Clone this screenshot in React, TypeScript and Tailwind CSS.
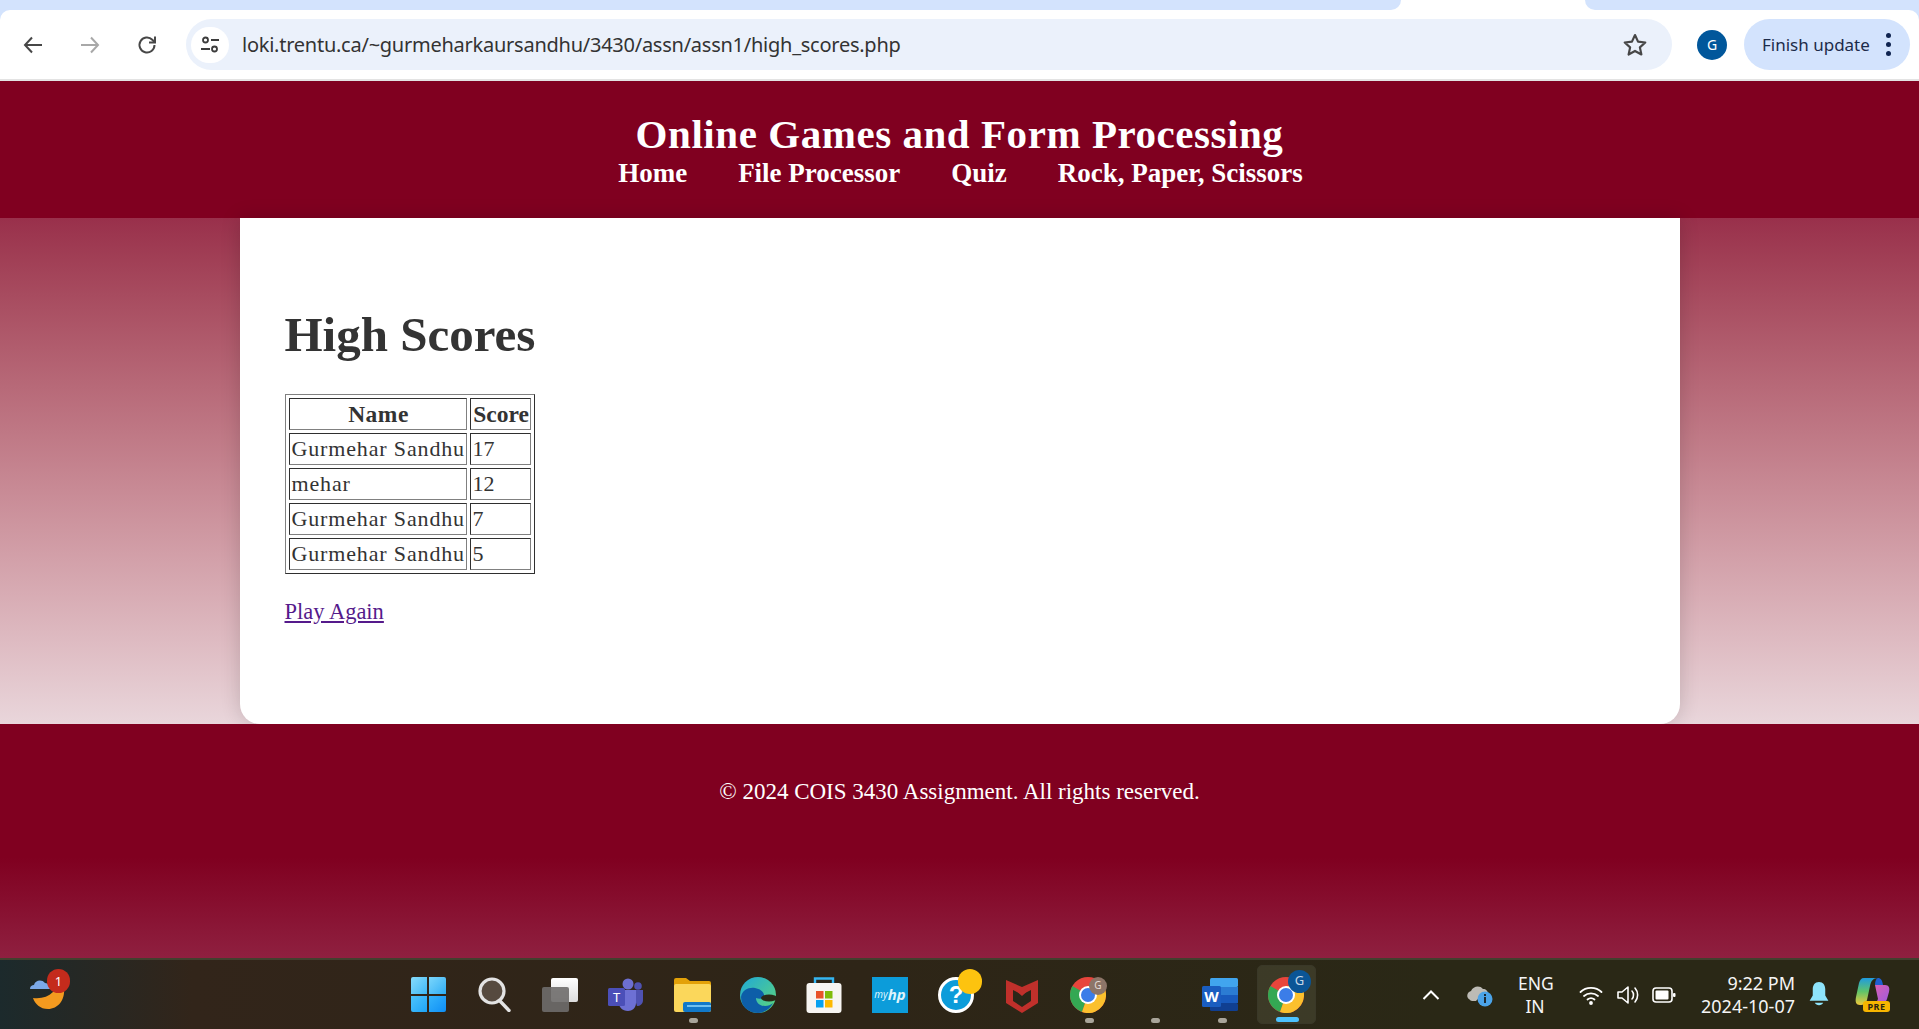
import React from "react";

const serif = "font-['Liberation_Serif',serif]";
const ui = "font-['Noto_Sans',sans-serif]";

function ChromeLogo({ badge, active }: { badge: string; active?: boolean }) {
  return (
    <div className="relative w-[36px] h-[36px]">
      <svg viewBox="0 0 36 36" className="w-[36px] h-[36px]">
        <circle cx="18" cy="18" r="18" fill="#e8453c" />
        <path d="M18 18 L2.400 9 A18 18 0 0 0 12 35 Z" fill="#34a853" />
        <path d="M18 18 L33.600 9 H18 M18 18 L33.600 9 A18 18 0 0 1 15 35.800 L12 35 Z" fill="#fbc02d" />
        <circle cx="18" cy="18" r="9" fill="#fff" />
        <circle cx="18" cy="18" r="7" fill="#3b7de8" />
      </svg>
      {active ? (
        <span className={`absolute -top-[7px] -right-[7px] w-[23px] h-[23px] rounded-full flex items-center justify-center text-[13px] text-[#c6d6e6] bg-[#0b5596] ${ui}`}>{badge}</span>
      ) : (
        <span className={`absolute top-0 -right-[1px] w-[18px] h-[18px] rounded-full flex items-center justify-center text-[10px] text-[#e4dcd6] bg-[#8d7568] ${ui}`}>{badge}</span>
      )}
    </div>
  );
}

function Slot({ children }: { children?: React.ReactNode }) {
  return <div className="w-[66px] flex justify-center items-center">{children}</div>;
}

function Taskbar() {
  return (
    <footer className="h-[71px] border-t-2 border-t-[#42402e] flex items-center shrink-0 relative bg-[linear-gradient(to_right,#1c2a2c_0%,#32251a_10%,#2e2517_45%,#2a2816_75%,#2a2816_100%)]">
      {/* weather widget */}
      <div className="absolute left-[30px] top-[9px] w-[40px] h-[40px]">
        <svg viewBox="0 0 40 40" className="w-[40px] h-[40px]">
          <path d="M3 29c8 1 15-1 20-6 3-3 6-5 11-3 1 11-6 20-16 20C10 40 5 35 3 29z" fill="#f39a1f" />
          <path d="M0 20c0-3 2-4 4-4 1-5 8-6 11-2 3 0 5 3 5 6z" fill="#7ba9e8" />
        </svg>
        <span className={`absolute left-[17px] top-0 w-[23px] h-[24px] rounded-full bg-[#c42b1c] text-white text-[13px] leading-[24px] text-center ${ui}`}>1</span>
      </div>

      <div className="absolute left-[395px] top-0 h-full flex items-center">
        <Slot>
          <div className="grid grid-cols-2 gap-[2px] w-[35px] h-[35px]">
            <span className="bg-gradient-to-br from-[#86dcfb] to-[#3cb8f5] rounded-tl-[2px]" />
            <span className="bg-gradient-to-br from-[#7ad6fb] to-[#2aaef5] rounded-tr-[2px]" />
            <span className="bg-gradient-to-br from-[#4cc4fb] to-[#1ca4f7] rounded-bl-[2px]" />
            <span className="bg-gradient-to-br from-[#34b4fb] to-[#0d8ef5] rounded-br-[2px]" />
          </div>
        </Slot>
        <Slot>
          <svg viewBox="0 0 33 35" className="w-[33px] h-[35px]">
            <circle cx="14" cy="14" r="12" fill="#564a3f" stroke="#e3e3e3" strokeWidth="3.200" />
            <path d="M22 24l9 9.500" stroke="#e3e3e3" strokeWidth="3.400" strokeLinecap="round" />
          </svg>
        </Slot>
        <Slot>
          <div className="relative w-[36px] h-[34px]">
            <span className="absolute left-[9px] top-0 w-[27px] h-[24px] rounded-[2px] bg-gradient-to-b from-white to-[#ddd]" />
            <span className="absolute left-0 top-[9px] w-[27px] h-[25px] rounded-[2px] bg-[#6f6d6b]/90" />
          </div>
        </Slot>
        <Slot>
          <svg viewBox="0 0 36 33" className="w-[36px] h-[33px]">
            <circle cx="20" cy="6" r="5.500" fill="#6d6fd0" />
            <circle cx="30" cy="8" r="3.800" fill="#4f52b2" />
            <path d="M24 12h11v10c0 4-3 6-6 6z" fill="#4f52b2" />
            <path d="M11 12h17v13c0 5-4 8-8 8-6 0-9-4-9-8z" fill="#6d70d4" />
            <rect x="0" y="10" width="17" height="18" rx="1.500" fill="#4b4fb8" />
            <text x="8.500" y="24" textAnchor="middle" fontSize="13" fill="#fff" fontFamily="Noto Sans">T</text>
          </svg>
        </Slot>
        <Slot>
          <svg viewBox="0 0 37 34" className="w-[37px] h-[34px]">
            <path d="M0 2a2 2 0 0 1 2-2h10l4 3h19a2 2 0 0 1 2 2v4H0z" fill="#e3a108" />
            <rect x="0" y="6" width="37" height="28" rx="2" fill="#fbd75b" />
            <rect x="9" y="24" width="28" height="10" rx="2" fill="#1178c8" />
            <rect x="13" y="27" width="24" height="2" fill="#6fc0f0" />
          </svg>
        </Slot>
        <Slot>
          <svg viewBox="0 0 36 36" className="w-[36px] h-[36px]">
            <defs>
              <linearGradient id="edgeA" x1="0" y1="0" x2="1" y2="1">
                <stop offset="0" stopColor="#1fa8d8" />
                <stop offset="1" stopColor="#5fd878" />
              </linearGradient>
            </defs>
            <circle cx="18" cy="18" r="18" fill="url(#edgeA)" />
            <path d="M1 20c1-7 8-10 14-9 6 1 10 5 9 9-1 2-5 2-8 1 0 4 3 8 9 8 3 0 6-1 8-3-3 6-9 10-15 10C9 36 1 30 1 20z" fill="#0d5ea8" />
            <ellipse cx="29" cy="21" rx="8" ry="3.500" fill="#2a2a18" />
          </svg>
        </Slot>
        <Slot>
          <svg viewBox="0 0 36 36" className="w-[36px] h-[36px]">
            <path d="M9 7V1.500h18V7" fill="none" stroke="#35b6f2" strokeWidth="2.400" />
            <rect x="0.500" y="6" width="35" height="30" rx="3" fill="#f7f5f2" />
            <rect x="10" y="14" width="7.500" height="7.500" fill="#e8532a" />
            <rect x="19" y="14" width="7.500" height="7.500" fill="#80bb0a" />
            <rect x="10" y="23" width="7.500" height="7.500" fill="#08a1f0" />
            <rect x="19" y="23" width="7.500" height="7.500" fill="#fdb900" />
          </svg>
        </Slot>
        <Slot>
          <div className={`w-[36px] h-[36px] bg-[#0c9cda] flex items-center justify-center text-[#dff4fc] text-[15px] italic ${ui}`}>
            <span className="text-[10px]">my</span><b>hp</b>
          </div>
        </Slot>
        <Slot>
          <div className="relative w-[36px] h-[36px]">
            <div className="absolute left-0 top-0 w-[36px] h-[36px] rounded-full bg-[#0c9cda] border-[3px] border-white flex items-center justify-center text-white text-[24px] font-bold leading-none font-['Liberation_Sans',sans-serif]">?</div>
            <span className="absolute left-[20px] -top-[8px] w-[24px] h-[25px] rounded-full bg-[#fdc30f]" />
          </div>
        </Slot>
        <Slot>
          <svg viewBox="0 0 32 36" className="w-[32px] h-[36px]">
            <path d="M0 3l16 7 16-7v23L16 36 0 26z" fill="#c0302b" />
            <path d="M7 13l9 4.500 9-4.500v11l-9 6-9-6z" fill="#2a2618" />
            <path d="M7 9l9 8 9-8" fill="none" stroke="#c0302b" strokeWidth="3" />
          </svg>
        </Slot>
        <Slot><ChromeLogo badge="G" /></Slot>
        <Slot />
        <Slot>
          <svg viewBox="0 0 36 33" className="w-[36px] h-[33px]">
            <rect x="8" y="0" width="28" height="9" fill="#41a5ee" rx="1.500" />
            <rect x="8" y="9" width="28" height="8" fill="#2b7cd3" />
            <rect x="8" y="17" width="28" height="8" fill="#185abd" />
            <rect x="8" y="25" width="28" height="8" fill="#103f91" rx="1.500" />
            <rect x="0" y="8" width="19" height="21" rx="1.500" fill="#1a5dc0" />
            <text x="9.500" y="24" textAnchor="middle" fontSize="15" fontWeight="700" fill="#fff" fontFamily="Noto Sans">W</text>
          </svg>
        </Slot>
        <Slot>
          <div className="relative w-[59px] h-[59px] flex justify-center items-center bg-[#45432f]/70 rounded-[5px] border border-[#3a3828]">
            <ChromeLogo badge="G" active />
            <span className="absolute bottom-[1px] left-[18px] w-[23px] h-[5px] rounded-full bg-[#4cc2ff]" />
          </div>
        </Slot>
      </div>

      {/* running dots */}
      <span className="absolute left-[689px] top-[58px] w-[9px] h-[5px] rounded-full bg-[#a9a59a]" />
      <span className="absolute left-[1085px] top-[58px] w-[9px] h-[5px] rounded-full bg-[#a9a59a]" />
      <span className="absolute left-[1151px] top-[58px] w-[9px] h-[5px] rounded-full bg-[#a9a59a]" />
      <span className="absolute left-[1218px] top-[58px] w-[9px] h-[5px] rounded-full bg-[#a9a59a]" />

      {/* tray */}
      <div className={`ml-auto flex items-center h-full text-white ${ui}`}>
        <svg viewBox="0 0 18 12" className="w-[18px] h-[12px] mr-[27px]"><path d="M1.500 10L9 2.500l7.500 7.500" fill="none" stroke="#fff" strokeWidth="2" /></svg>
        <div className="relative w-[26px] h-[24px] mr-[25px]">
          <svg viewBox="0 0 26 24" className="w-[26px] h-[24px]">
            <path d="M2 16c-3-2-2-7 2-8 2-5 9-6 12-2 3 0 5 2 5 5v2c-6 0-10 2-12 5H5c-1 0-2-1-3-2z" fill="#bdbbb5" />
            <circle cx="18" cy="16" r="7.500" fill="#4ba3e8" />
            <rect x="17" y="14" width="2" height="6" fill="#1d2a33" />
            <rect x="17" y="11" width="2" height="2" fill="#1d2a33" />
          </svg>
        </div>
        <div className="w-[34px] text-center text-[17.5px] leading-[23px] mr-[27px] text-[#f5f5f5]"><div>ENG</div><div>IN</div></div>
        <svg viewBox="0 0 24 20" className="w-[24px] h-[20px] mr-[14px]" fill="none" stroke="#fff" strokeWidth="1.800" strokeLinecap="round">
          <path d="M1.500 7C7 1.500 17 1.500 22.500 7" />
          <path d="M5 11c4-3.500 10-3.500 14 0" />
          <path d="M8.500 14.500c2-1.500 5-1.500 7 0" />
          <circle cx="12" cy="18" r="1" fill="#fff" />
        </svg>
        <svg viewBox="0 0 24 22" className="w-[24px] h-[22px] mr-[11px]" fill="none" stroke="#fff" strokeWidth="1.600" strokeLinejoin="round" strokeLinecap="round">
          <path d="M1 8v6h4l6 5V3L5 8z" />
          <path d="M15 7c2 2 2 6 0 8" />
          <path d="M18 4c3.500 4 3.500 10 0 14" />
        </svg>
        <svg viewBox="0 0 24 16" className="w-[24px] h-[16px] mr-[25px]" fill="none">
          <rect x="1" y="1" width="19" height="14" rx="3" stroke="#fff" strokeWidth="1.600" />
          <rect x="3.500" y="3.500" width="13" height="9" rx="1" fill="#fff" />
          <rect x="21" y="6" width="2.500" height="4" rx="1" fill="#fff" />
        </svg>
        <div className="text-right text-[18px] leading-[23px] text-[#f5f5f5] mr-[13px]"><div>9:22 PM</div><div>2024-10-07</div></div>
        <svg viewBox="0 0 20 24" className="w-[22px] h-[25px] mr-[25px]">
          <path d="M10 0c4 0 6 3 6 7v6l3 5H1l3-5V7c0-4 2-7 6-7z" fill="#8ee4fb" />
          <path d="M6 20h8c-1 3-7 3-8 0z" fill="#8ee4fb" />
        </svg>
        <div className="relative w-[35px] h-[34px] mr-[29px]">
          <svg viewBox="0 0 35 27" className="absolute left-0 top-0 w-[35px] h-[27px]">
            <defs>
              <linearGradient id="cpA" x1="0" y1="0" x2="0" y2="1">
                <stop offset="0" stopColor="#1f9be0" />
                <stop offset="0.5" stopColor="#5fc46a" />
                <stop offset="1" stopColor="#f0c93a" />
              </linearGradient>
              <linearGradient id="cpB" x1="0" y1="0" x2="1" y2="1">
                <stop offset="0" stopColor="#e060b0" />
                <stop offset="1" stopColor="#9a5be0" />
              </linearGradient>
            </defs>
            <path d="M9 0h14c-5 0-7 3-8 8l-3 14c-1 3-3 5-7 5-4 0-5-3-4-8L4 5c1-3 2-5 5-5z" fill="url(#cpA)" />
            <path d="M20 7h10c4 0 5 3 4 7l-2 7c-1 3-3 5-6 5H17c3 0 5-2 6-5z" fill="url(#cpB)" />
            <path d="M23 0c3 0 4 2 5 7h-8c0-3 1-7 3-7z" fill="#1f5fd0" />
          </svg>
          <span className="absolute right-0 bottom-0 h-[11px] w-[27px] rounded-[3px] bg-[#f7b500] text-[#2b2510] text-[9px] font-bold leading-[11px] text-center tracking-[0.5px]">PRE</span>
        </div>
      </div>
    </footer>
  );
}

function Browser() {
  return (
    <div className="shrink-0 bg-[#d3e3fd]">
      <div className="h-[10px] bg-white flex">
        <div className="w-[1401px] bg-[#d3e3fd] rounded-br-[14px]" />
        <div className="flex-1" />
        <div className="w-[334px] bg-[#d3e3fd] rounded-bl-[14px]" />
      </div>
      <div className="h-[71px] bg-white rounded-t-[10px] flex items-center border-b-2 border-b-[#e3e3e3]">
        <svg viewBox="0 0 24 24" className="w-[24px] h-[24px] ml-[21px] text-[#474747]" fill="none" stroke="currentColor" strokeWidth="2"><path d="M21 12H4M11 4.500L4 12l7 7.500" /></svg>
        <svg viewBox="0 0 24 24" className="w-[24px] h-[24px] ml-[33px] text-[#a8a8a8]" fill="none" stroke="currentColor" strokeWidth="2"><path d="M3 12h17M13 4.500l7 7.500-7 7.500" /></svg>
        <svg viewBox="0 0 24 24" className="w-[24px] h-[24px] ml-[33px] text-[#474747]" fill="none" stroke="currentColor" strokeWidth="2"><path d="M19.500 12a7.500 7.500 0 1 1-2.200-5.300L19.500 9" /><path d="M20 3.500V9.500H14" /></svg>
        <div className="ml-[27px] w-[1486px] h-[51px] rounded-full bg-[#ebf1fb] flex items-center pl-[5px] pr-[24px]">
          <div className="w-[38px] h-[36px] rounded-full bg-white flex items-center justify-center">
            <svg viewBox="0 0 20 20" className="w-[20px] h-[20px]" fill="none" stroke="#3c3c3c" strokeWidth="1.800"><circle cx="5.500" cy="5" r="2.500" /><path d="M11 5h8M1 14h9" /><circle cx="14.500" cy="14" r="2.500" /></svg>
          </div>
          <span className={`ml-[13px] text-[20px] text-[#333] ${ui} tracking-[-0.25px]`}>loki.trentu.ca/~gurmeharkaursandhu/3430/assn/assn1/high_scores.php</span>
          <svg viewBox="0 0 24 24" className="ml-auto w-[26px] h-[26px]" fill="none" stroke="#474747" strokeWidth="2" strokeLinejoin="round"><path d="M12 2.800l2.800 6.100 6.700.8-5 4.500 1.400 6.600L12 17.500 6.100 20.800l1.400-6.600-5-4.500 6.700-.8z" /></svg>
        </div>
        <div className={`ml-[25px] w-[30px] h-[30px] rounded-full bg-[#01579b] flex items-center justify-center text-[14px] text-white ${ui}`}>G</div>
        <div className={`ml-[17px] w-[166px] h-[51px] rounded-full bg-[#d3e3fd] flex items-center pl-[18px] text-[17px] text-[#1c2b4a] ${ui}`}>
          <span>Finish update</span>
          <span className="ml-auto mr-[19px] flex flex-col gap-[4px]">
            <span className="w-[5px] h-[5px] rounded-full bg-[#0f2350]" />
            <span className="w-[5px] h-[5px] rounded-full bg-[#0f2350]" />
            <span className="w-[5px] h-[5px] rounded-full bg-[#0f2350]" />
          </span>
        </div>
      </div>
    </div>
  );
}

const rows: [string, string][] = [
  ["Gurmehar Sandhu", "17"],
  ["mehar", "12"],
  ["Gurmehar Sandhu", "7"],
  ["Gurmehar Sandhu", "5"],
];
const cell = "border border-t-[#2f2f2f] border-l-[#2f2f2f] border-r-[#808080] border-b-[#808080] h-[32px] p-0 pl-[2px] leading-none";

export default function App() {
  return (
    <div className={`h-[1029px] w-full overflow-hidden flex flex-col bg-white ${serif}`}>
      <Browser />
      <header className="h-[137px] shrink-0 bg-[#800020] text-white flex flex-col items-center pt-[30px]">
        <h1 className="text-[41px] font-bold leading-[46px] tracking-[0.55px]">Online Games and Form Processing</h1>
        <nav className="flex gap-[51px] text-[27px] font-bold leading-[29px] mt-[2px] ml-[2px]">
          <a>Home</a>
          <a>File Processor</a>
          <a>Quiz</a>
          <a>Rock, Paper, Scissors</a>
        </nav>
      </header>
      <div className="h-[506px] shrink-0 bg-gradient-to-b from-[#99304b] to-[#e9d6db] flex justify-center">
        <main className="w-[1440px] h-full bg-white rounded-b-[20px] shadow-[0_0_20px_rgba(0,0,0,0.16)] pl-[45px] text-[#333] pt-[90px]">
          <h2 className="text-[49px] font-bold leading-[54px]">High Scores</h2>
          <table className="mt-[32px] w-[250px] table-fixed border-separate border-spacing-[3px] border border-t-[#808080] border-l-[#808080] border-r-[#2f2f2f] border-b-[#2f2f2f] text-[22px]">
            <thead>
              <tr>
                <th className={`${cell} pt-[2px] w-[178px] text-center font-bold text-[23.500px] tracking-[0.5px]`}>Name</th>
                <th className={`${cell} pt-[2px] font-bold text-[23.500px]`}>Score</th>
              </tr>
            </thead>
            <tbody>
              {rows.map((r, i) => (
                <tr key={i}>
                  <td className={`${cell} tracking-[0.85px] whitespace-nowrap`}>{r[0]}</td>
                  <td className={cell}>{r[1]}</td>
                </tr>
              ))}
            </tbody>
          </table>
          <a className="inline-block mt-[25px] text-[22.500px] underline text-[#551a8b] leading-[26px]">Play Again</a>
        </main>
      </div>
      <div className="flex-1 bg-[linear-gradient(to_bottom,#800020_0%,#800020_57%,#8f2040_100%)] text-white text-center pt-[55px] text-[23px] leading-[26px]">
        © 2024 COIS 3430 Assignment. All rights reserved.
      </div>
      <Taskbar />
    </div>
  );
}
